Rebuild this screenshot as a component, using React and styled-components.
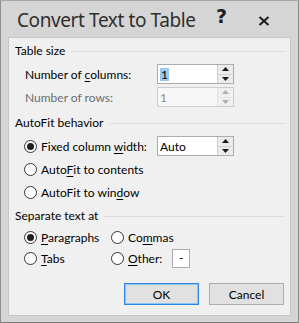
import React from "react";
import styled, { createGlobalStyle } from "styled-components";

const GlobalStyle = createGlobalStyle`
  html, body { margin: 0; padding: 0; background: #d6d6d6; }
  body { font-family: Lato, "Noto Sans", sans-serif; font-size: 12px; color: #000; }
  * { box-sizing: border-box; }
`;

const Window = styled.div`
  width: 299px;
  height: 323px;
  background: #d5d5d5;
  border: 1px solid #8e8e8e;
  border-top-color: #a8a8a8;
  border-bottom-color: #7d7d7d;
  display: flex;
  flex-direction: column;
  padding: 0 7px 6px 7px;
`;

const TitleBar = styled.div`
  height: 36px;
  display: flex;
  align-items: flex-start;
  position: relative;
`;

const Title = styled.div`
  font-family: "Noto Sans", sans-serif;
  font-size: 19px;
  line-height: 26px;
  color: #2f2f2f;
  margin: 6px 0 0 9px;
  letter-spacing: -0.4px;
`;

const TitleButton = styled.div`
  position: absolute;
  top: ${(p) => p.$top}px;
  left: ${(p) => p.$left}px;
  font-family: "DejaVu Sans", sans-serif;
  font-weight: bold;
  font-size: 19px;
  line-height: 20px;
  color: #1e1e1e;
`;

const Panel = styled.div`
  flex: 1;
  background: #f0f0f0;
  border: 1px solid #c6c6c6;
  padding: 5px 6px 0 6px;
  display: flex;
  flex-direction: column;
`;

const SectionHeader = styled.div`
  display: flex;
  align-items: center;
  height: 16px;
  line-height: 16px;
  margin-top: ${(p) => p.$mt || 0}px;
`;

const Rule = styled.div`
  flex: 1;
  height: 1px;
  background: #dcdcdc;
  margin-left: 6px;
`;

const SectionBody = styled.div`
  display: flex;
  flex-direction: column;
  gap: ${(p) => p.$gap}px;
  padding-left: ${(p) => p.$indent}px;
  margin-top: ${(p) => p.$mt}px;
`;

const Row = styled.div`
  display: flex;
  align-items: center;
  height: ${(p) => p.$h || 20}px;
`;

const FieldLabel = styled.div`
  width: ${(p) => p.$w}px;
  color: ${(p) => (p.$disabled ? "#6d6d6d" : "#000")};
  white-space: nowrap;
`;

const Spinner = styled.div`
  width: 77px;
  height: 20px;
  display: flex;
  border: 1px solid ${(p) => (p.$disabled ? "#cccccc" : "#acacac")};
  background: ${(p) => (p.$disabled ? "#f0f0f0" : "#fff")};
`;

const SpinText = styled.div`
  flex: 1;
  padding-left: 2px;
  display: flex;
  align-items: center;
  color: ${(p) => (p.$disabled ? "#8a8a8a" : "#000")};
  background: ${(p) => (p.$disabled ? "#f7f7f7" : "#fff")};
`;

const Selected = styled.span`
  background: #99c9ef;
  line-height: 13px;
  padding: 0 1px;
`;

const SpinButtons = styled.div`
  width: 16px;
  display: flex;
  flex-direction: column;
  border-left: 1px solid ${(p) => (p.$disabled ? "#e2e2e2" : "#d0d0d0")};
`;

const SpinHalf = styled.div`
  flex: 1;
  display: flex;
  align-items: center;
  justify-content: center;
  background: ${(p) => (p.$disabled ? "#f0f0f0" : "#ececec")};
  border-top: ${(p) => (p.$bottom ? `1px solid ${p.$disabled ? "#e2e2e2" : "#d0d0d0"}` : "none")};
`;

const Arrow = ({ down, disabled }) => (
  <svg width="7" height="4" viewBox="0 0 7 4">
    <polygon
      points={down ? "0,0 7,0 3.5,4" : "0,4 7,4 3.5,0"}
      fill={disabled ? "#b0b0b0" : "#1a1a1a"}
    />
  </svg>
);

const Spin = ({ value, disabled, selected }) => (
  <Spinner $disabled={disabled}>
    <SpinText $disabled={disabled}>{selected ? <Selected>{value}</Selected> : value}</SpinText>
    <SpinButtons $disabled={disabled}>
      <SpinHalf $disabled={disabled}>
        <Arrow disabled={disabled} />
      </SpinHalf>
      <SpinHalf $disabled={disabled} $bottom>
        <Arrow down disabled={disabled} />
      </SpinHalf>
    </SpinButtons>
  </Spinner>
);

const RadioWrap = styled.div`
  display: flex;
  align-items: center;
  width: ${(p) => (p.$w ? `${p.$w}px` : "auto")};
`;

const RadioCircle = styled.div`
  width: 13px;
  height: 13px;
  border-radius: 50%;
  border: 1px solid #333;
  background: #fff;
  display: flex;
  align-items: center;
  justify-content: center;
  margin-right: 4px;
  flex-shrink: 0;
`;

const RadioDot = styled.div`
  width: 7px;
  height: 7px;
  border-radius: 50%;
  background: #1e1e1e;
`;

const RadioText = styled.span`
  white-space: nowrap;
`;

const U = styled.span`
  text-decoration: underline;
  text-underline-offset: 2px;
`;

const Radio = ({ checked, children, w }) => (
  <RadioWrap $w={w}>
    <RadioCircle>{checked && <RadioDot />}</RadioCircle>
    <RadioText>{children}</RadioText>
  </RadioWrap>
);

const SmallBox = styled.div`
  width: 18px;
  height: 19px;
  border: 1px solid #acacac;
  background: #fff;
  display: flex;
  align-items: center;
  justify-content: center;
  margin-left: 10px;
  padding-bottom: 1px;
`;

const ButtonRow = styled.div`
  display: flex;
  justify-content: flex-end;
  gap: 10px;
  margin-top: 15px;
`;

const Button = styled.div`
  width: 75px;
  height: 22px;
  display: flex;
  align-items: center;
  justify-content: center;
  background: #e1e1e1;
  border: 1px solid ${(p) => (p.$primary ? "#2a87e6" : "#adadad")};
  box-shadow: ${(p) => (p.$primary ? "inset 0 0 0 1px #8fc1f2" : "none")};
`;

export default function App() {
  return (
    <>
      <GlobalStyle />
      <Window>
        <TitleBar>
          <Title>Convert Text to Table</Title>
          <TitleButton $top={5} $left={208}>?</TitleButton>
          <TitleButton $top={8} $left={250}>
            <svg width="12" height="10" viewBox="0 0 12 10">
              <path d="M1.5 1 L10.5 9 M10.5 1 L1.5 9" stroke="#1a1a1a" strokeWidth="2" />
            </svg>
          </TitleButton>
        </TitleBar>
        <Panel>
          <SectionHeader>
            Table size
            <Rule />
          </SectionHeader>
          <SectionBody $gap={3} $indent={10} $mt={5}>
            <Row>
              <FieldLabel $w={132}>
                Number of <U>c</U>olumns:
              </FieldLabel>
              <Spin value="1" selected />
            </Row>
            <Row>
              <FieldLabel $w={132} $disabled>
                Number of rows:
              </FieldLabel>
              <Spin value="1" disabled />
            </Row>
          </SectionBody>

          <SectionHeader $mt={8}>
            AutoFit behavior
            <Rule />
          </SectionHeader>
          <SectionBody $gap={3} $indent={9} $mt={5}>
            <Row>
              <Radio checked w={133}>
                Fixed column <U>w</U>idth:
              </Radio>
              <Spin value="Auto" />
            </Row>
            <Row>
              <Radio>
                Auto<U>F</U>it to contents
              </Radio>
            </Row>
            <Row>
              <Radio>
                AutoFit to win<U>d</U>ow
              </Radio>
            </Row>
          </SectionBody>

          <SectionHeader $mt={6}>
            Separate text at
            <Rule />
          </SectionHeader>
          <SectionBody $gap={1} $indent={9} $mt={3}>
            <Row>
              <Radio checked w={87}>
                <U>P</U>aragraphs
              </Radio>
              <Radio>
                Co<U>m</U>mas
              </Radio>
            </Row>
            <Row>
              <Radio w={87}>
                <U>T</U>abs
              </Radio>
              <Radio>
                <U>O</U>ther:
              </Radio>
              <SmallBox>-</SmallBox>
            </Row>
          </SectionBody>

          <ButtonRow>
            <Button $primary>OK</Button>
            <Button>Cancel</Button>
          </ButtonRow>
        </Panel>
      </Window>
    </>
  );
}
